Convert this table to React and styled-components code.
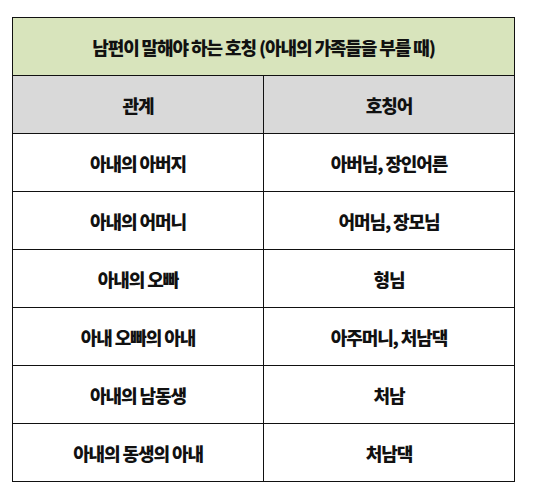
import React from 'react';
import styled, { createGlobalStyle } from 'styled-components';

const GlobalStyle = createGlobalStyle`
    body {
        margin: 0;
        background: #ffffff;
        font-family: "Noto Sans CJK KR", "Noto Sans", sans-serif;
    }
`;

const rows = [
    ['아내의 아버지', '아버님, 장인어른'],
    ['아내의 어머니', '어머님, 장모님'],
    ['아내의 오빠', '형님'],
    ['아내 오빠의 아내', '아주머니, 처남댁'],
    ['아내의 남동생', '처남'],
    ['아내의 동생의 아내', '처남댁'],
];

const App = () => {
    return (
        <>
            <GlobalStyle />
            <StyledPage>
                <StyledTable>
                    <tbody>
                        <tr>
                            <Cell colSpan={2} $bg={"#d8e4bc"}>남편이 말해야 하는 호칭 (아내의 가족들을 부를 때)</Cell>
                        </tr>
                        <tr>
                            <Cell $bg={"#d9d9d9"}>관계</Cell>
                            <Cell $bg={"#d9d9d9"}>호칭어</Cell>
                        </tr>
                        {rows.map((item, index) => (
                            <tr key={index}>
                                <Cell>{item[0]}</Cell>
                                <Cell>{item[1]}</Cell>
                            </tr>
                        ))}
                    </tbody>
                </StyledTable>
            </StyledPage>
        </>
    );
};

const StyledPage = styled.div`
    padding: 17px 0 0 12px;
`;

const StyledTable = styled.table`
    width: 503px;
    border-collapse: collapse;
    table-layout: fixed;
`;

const Cell = styled.td`
    height: 57px;
    padding: 0;
    border: 1.5px solid #111111;
    background: ${(props) => props.$bg || '#ffffff'};
    text-align: center;
    vertical-align: middle;
    font-size: 18px;
    font-weight: 900;
    letter-spacing: -1.1px;
    color: #111111;
`;

export default App;
